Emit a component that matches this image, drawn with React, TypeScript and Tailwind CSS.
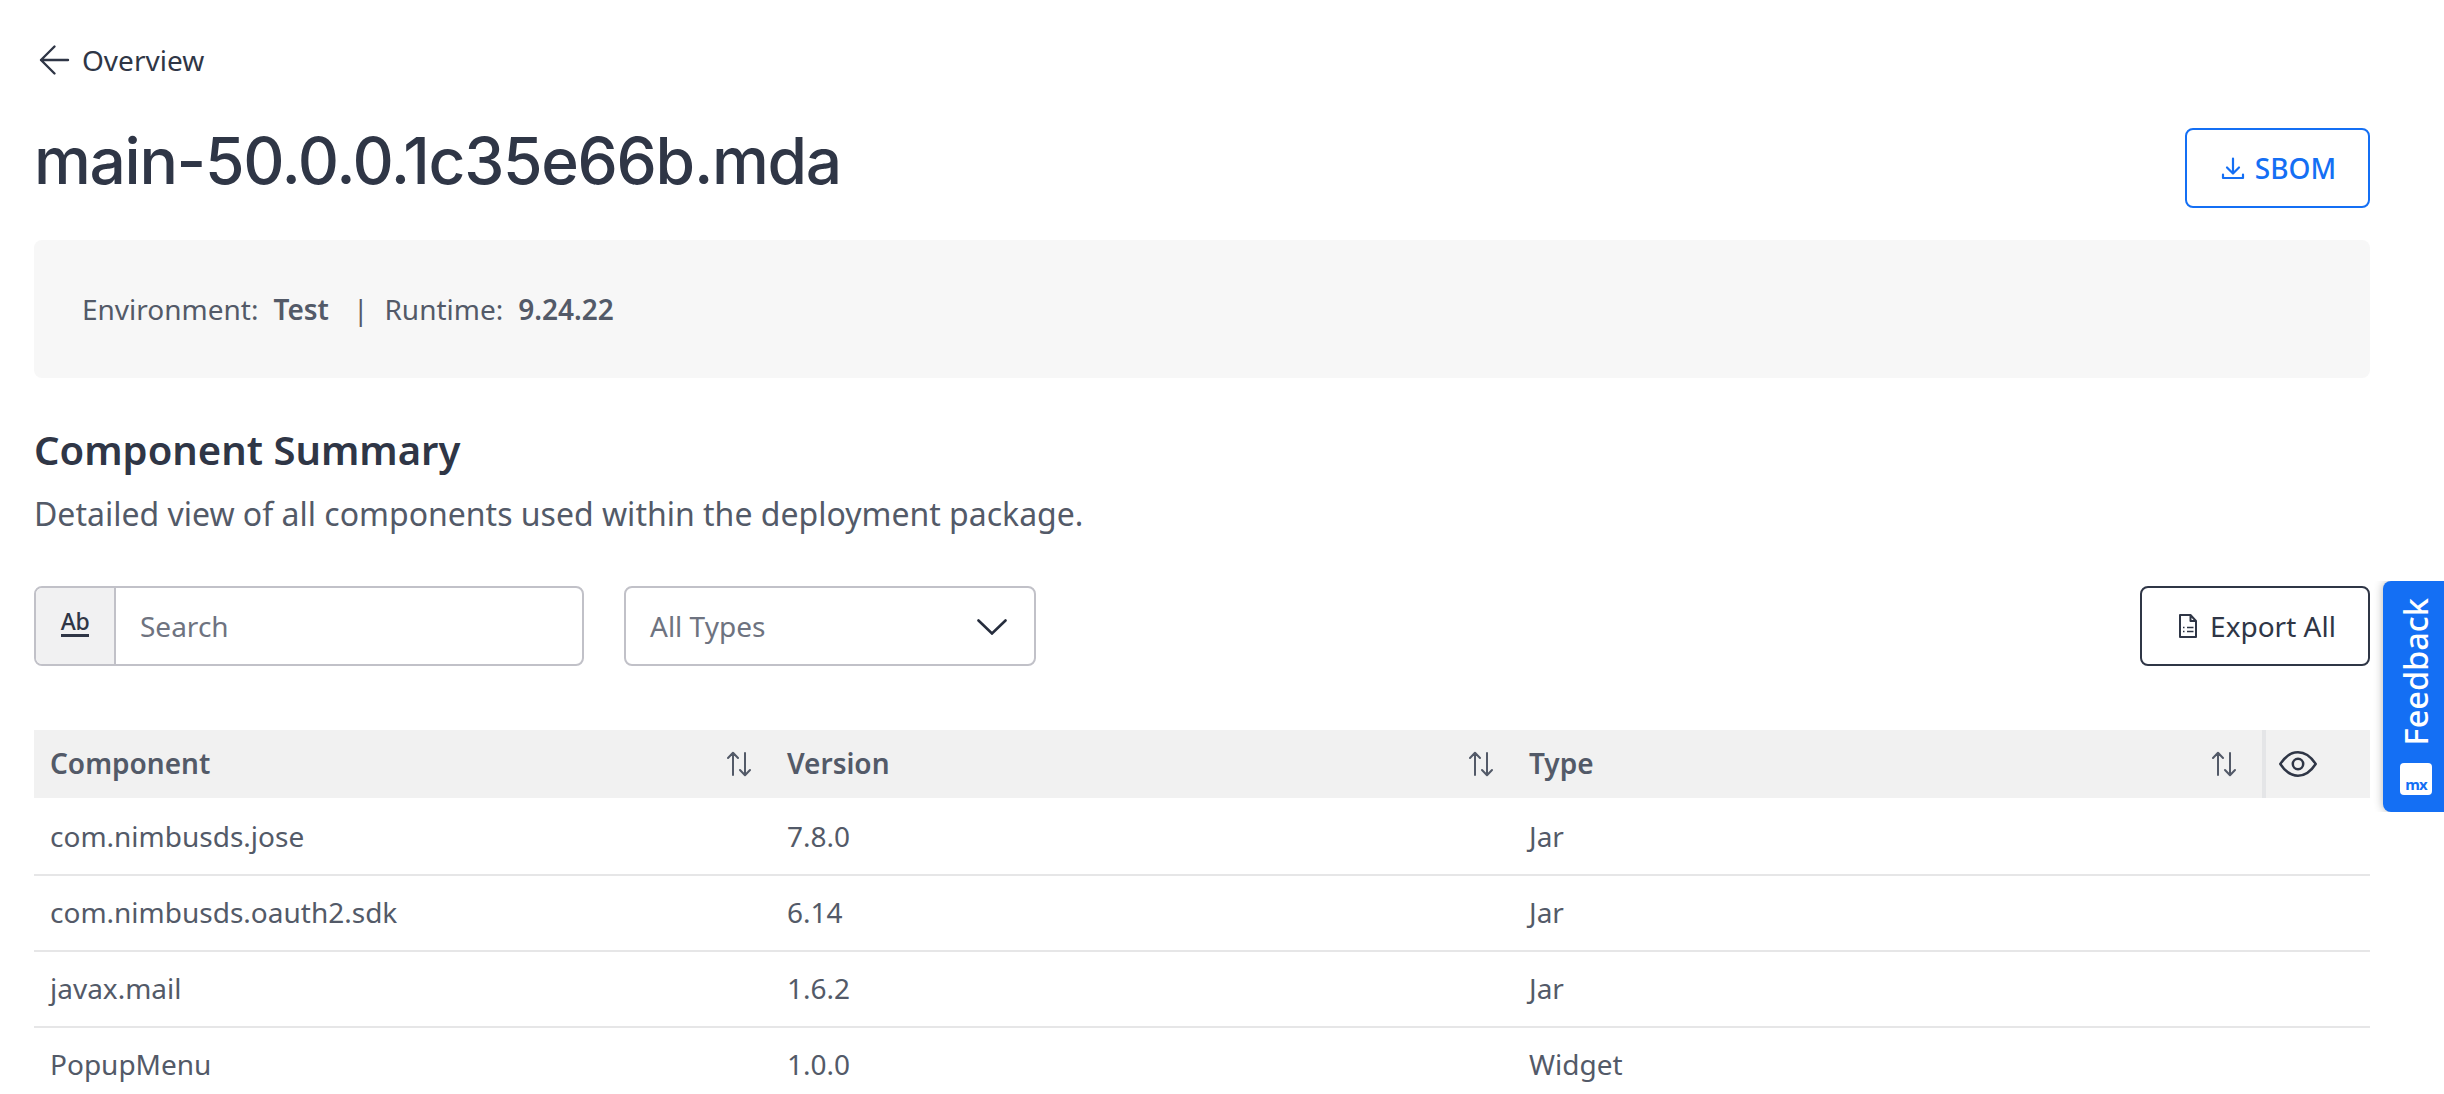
import React from "react";

const rows = [
  ["com.nimbusds.jose", "7.8.0", "Jar"],
  ["com.nimbusds.oauth2.sdk", "6.14", "Jar"],
  ["javax.mail", "1.6.2", "Jar"],
  ["PopupMenu", "1.0.0", "Widget"],
];

function BackArrow() {
  return (
    <svg className="h-8 w-8" viewBox="0 0 32 32" fill="none" stroke="currentColor" strokeWidth="2.4" strokeLinecap="round" strokeLinejoin="round">
      <path d="M29 16H2M15.500 2.500L2 16l13.500 13.500" />
    </svg>
  );
}

function DownloadIcon() {
  return (
    <svg className="h-6 w-6" viewBox="0 0 24 24" fill="none" stroke="currentColor" strokeWidth="2.2" strokeLinecap="round" strokeLinejoin="round">
      <path d="M12 2.500V17M6 11.500l6 6 6-6M2 18.500V22h20v-3.500" />
    </svg>
  );
}

function DocumentIcon() {
  return (
    <svg className="h-6 w-[18px]" viewBox="0 0 18 24" fill="none" stroke="currentColor" strokeWidth="2" strokeLinejoin="round">
      <path d="M1 1h10.500L17 7v16H1zM11.500 1v6H17" />
      <path d="M4 13.500h1.500M8 13.500h6.500M4 17.500h1.500M8 17.500h6.500" strokeWidth="1.300" />
    </svg>
  );
}

function SortIcon() {
  return (
    <svg className="h-[26px] w-6" viewBox="0 0 24 26" fill="none" stroke="currentColor" strokeWidth="2" strokeLinecap="round" strokeLinejoin="round">
      <path d="M6 24V2M1 7l5-5.300L11 7M18 2v22M13 19l5 5.300L23 19" />
    </svg>
  );
}

function EyeIcon() {
  return (
    <svg className="h-[26px] w-[38px]" viewBox="0 0 38 26" fill="none" stroke="currentColor" strokeWidth="2.500" strokeLinejoin="round">
      <path d="M1.300 13C6.500 5 12 1.300 19 1.300S31.500 5 36.700 13C31.500 21 26 24.700 19 24.700S6.500 21 1.300 13z" />
      <circle cx="19" cy="13" r="5.200" />
    </svg>
  );
}

function Header({ label, pad }: { label: string; pad: string }) {
  return (
    <div className={`flex items-center justify-between pl-4 ${pad}`}>
      <span className="-mt-0.5 font-semibold">{label}</span>
      <SortIcon />
    </div>
  );
}

export default function App() {
  return (
    <div className="relative h-[1094px] w-[2444px] overflow-hidden bg-white pl-[34px] pr-[74px] font-['Noto_Sans',sans-serif] text-[28px] leading-[38px] text-[#535a68]">
      <div className="flex items-center gap-[11px] pt-[41px] pl-[5px] text-[#2f3646]">
        <BackArrow />
        <span>Overview</span>
      </div>

      <div className="mt-[49px] flex h-20 items-start justify-between">
        <h1 className="-mt-[9px] font-['Inter',sans-serif] text-[64px] leading-[84px] font-[550] tracking-[-1.3px] whitespace-nowrap text-[#2f3646]">
          main-50.0.0.1c35e66b.mda
        </h1>
        <button className="flex h-20 w-[185px] items-center justify-center gap-2.5 rounded-lg border-2 border-[#146ff4] pl-0.5 font-medium text-[#146ff4]">
          <DownloadIcon />
          <span>SBOM</span>
        </button>
      </div>

      <div className="mt-8 flex h-[138px] items-center rounded-lg bg-[#f7f7f7] pl-12">
        <span>Environment:</span>
        <span className="ml-[15px] font-semibold">Test</span>
        <span className="ml-6">|</span>
        <span className="ml-4">Runtime:</span>
        <span className="ml-[15px] font-semibold">9.24.22</span>
      </div>

      <h2 className="mt-[45px] text-[40px] leading-[54px] font-semibold text-[#2f3646]">Component Summary</h2>
      <p className="mt-[15px] text-[32px] leading-[44px]">Detailed view of all components used within the deployment package.</p>

      <div className="mt-[50px] flex h-20">
        <div className="flex w-[550px] overflow-hidden rounded-lg border-2 border-[#c1c1c8]">
          <div className="flex w-20 items-center justify-center border-r-2 border-[#c1c1c8] bg-[#f1f1f2] text-[#2f3646]">
            <span className="-mt-2 border-b-[3px] border-[#2f3646] text-[23px] leading-[26px] font-medium tracking-[-0.5px]">Ab</span>
          </div>
          <div className="flex items-center pl-6 text-[#6e7380]">Search</div>
        </div>
        <div className="ml-10 flex w-[412px] items-center justify-between rounded-lg border-2 border-[#c1c1c8] pr-[27px] pl-6 text-[#6e7380]">
          <span>All Types</span>
          <svg className="mt-0.5 h-4 w-[30px]" viewBox="0 0 30 16" fill="none" stroke="#262d3d" strokeWidth="2.600" strokeLinecap="round">
            <path d="M1.500 1.500L15 14.500 28.500 1.500" />
          </svg>
        </div>
        <button className="ml-auto flex w-[230px] items-center justify-center gap-[13px] rounded-lg border-2 border-[#2f3646] pl-[5px] text-[#2f3646]">
          <DocumentIcon />
          <span>Export All</span>
        </button>
      </div>

      <div className="mt-16">
        <div className="grid h-[68px] grid-cols-[737px_742px_749px_108px] bg-[#f1f1f1]">
          <Header label="Component" pad="pr-5" />
          <Header label="Version" pad="pr-5" />
          <Header label="Type" pad="pr-[26px]" />
          <div className="flex items-center border-l-4 border-[#e4e5e7] pl-[13px] text-[#2f3646]">
            <EyeIcon />
          </div>
        </div>
        <div className="pt-0.5">
          {rows.map((r) => (
            <div key={r[0]} className="grid h-[76px] grid-cols-[737px_742px_857px] items-center border-b-2 border-[#e6e6e7] pb-0.5">
              {r.map((c) => (
                <span key={c} className="pl-4">{c}</span>
              ))}
            </div>
          ))}
        </div>
      </div>

      <div className="absolute top-[581px] right-0 flex h-[231px] w-[61px] flex-col items-center justify-end rounded-l-lg bg-[#146ff4] pb-[17px] shadow-[0_0_10px_rgba(0,0,0,0.3)] [clip-path:inset(0_0_0_-14px)]">
        <span className="mr-[-4px] mb-[18px] rotate-180 text-[32.500px] leading-[44px] font-medium text-white [writing-mode:vertical-rl]">Feedback</span>
        <div className="mr-[-5px] flex h-8 w-8 items-center justify-center rounded bg-white pt-2.5 text-[15px] leading-4 font-bold tracking-[-1px] text-[#146ff4]">mx</div>
      </div>
    </div>
  );
}
